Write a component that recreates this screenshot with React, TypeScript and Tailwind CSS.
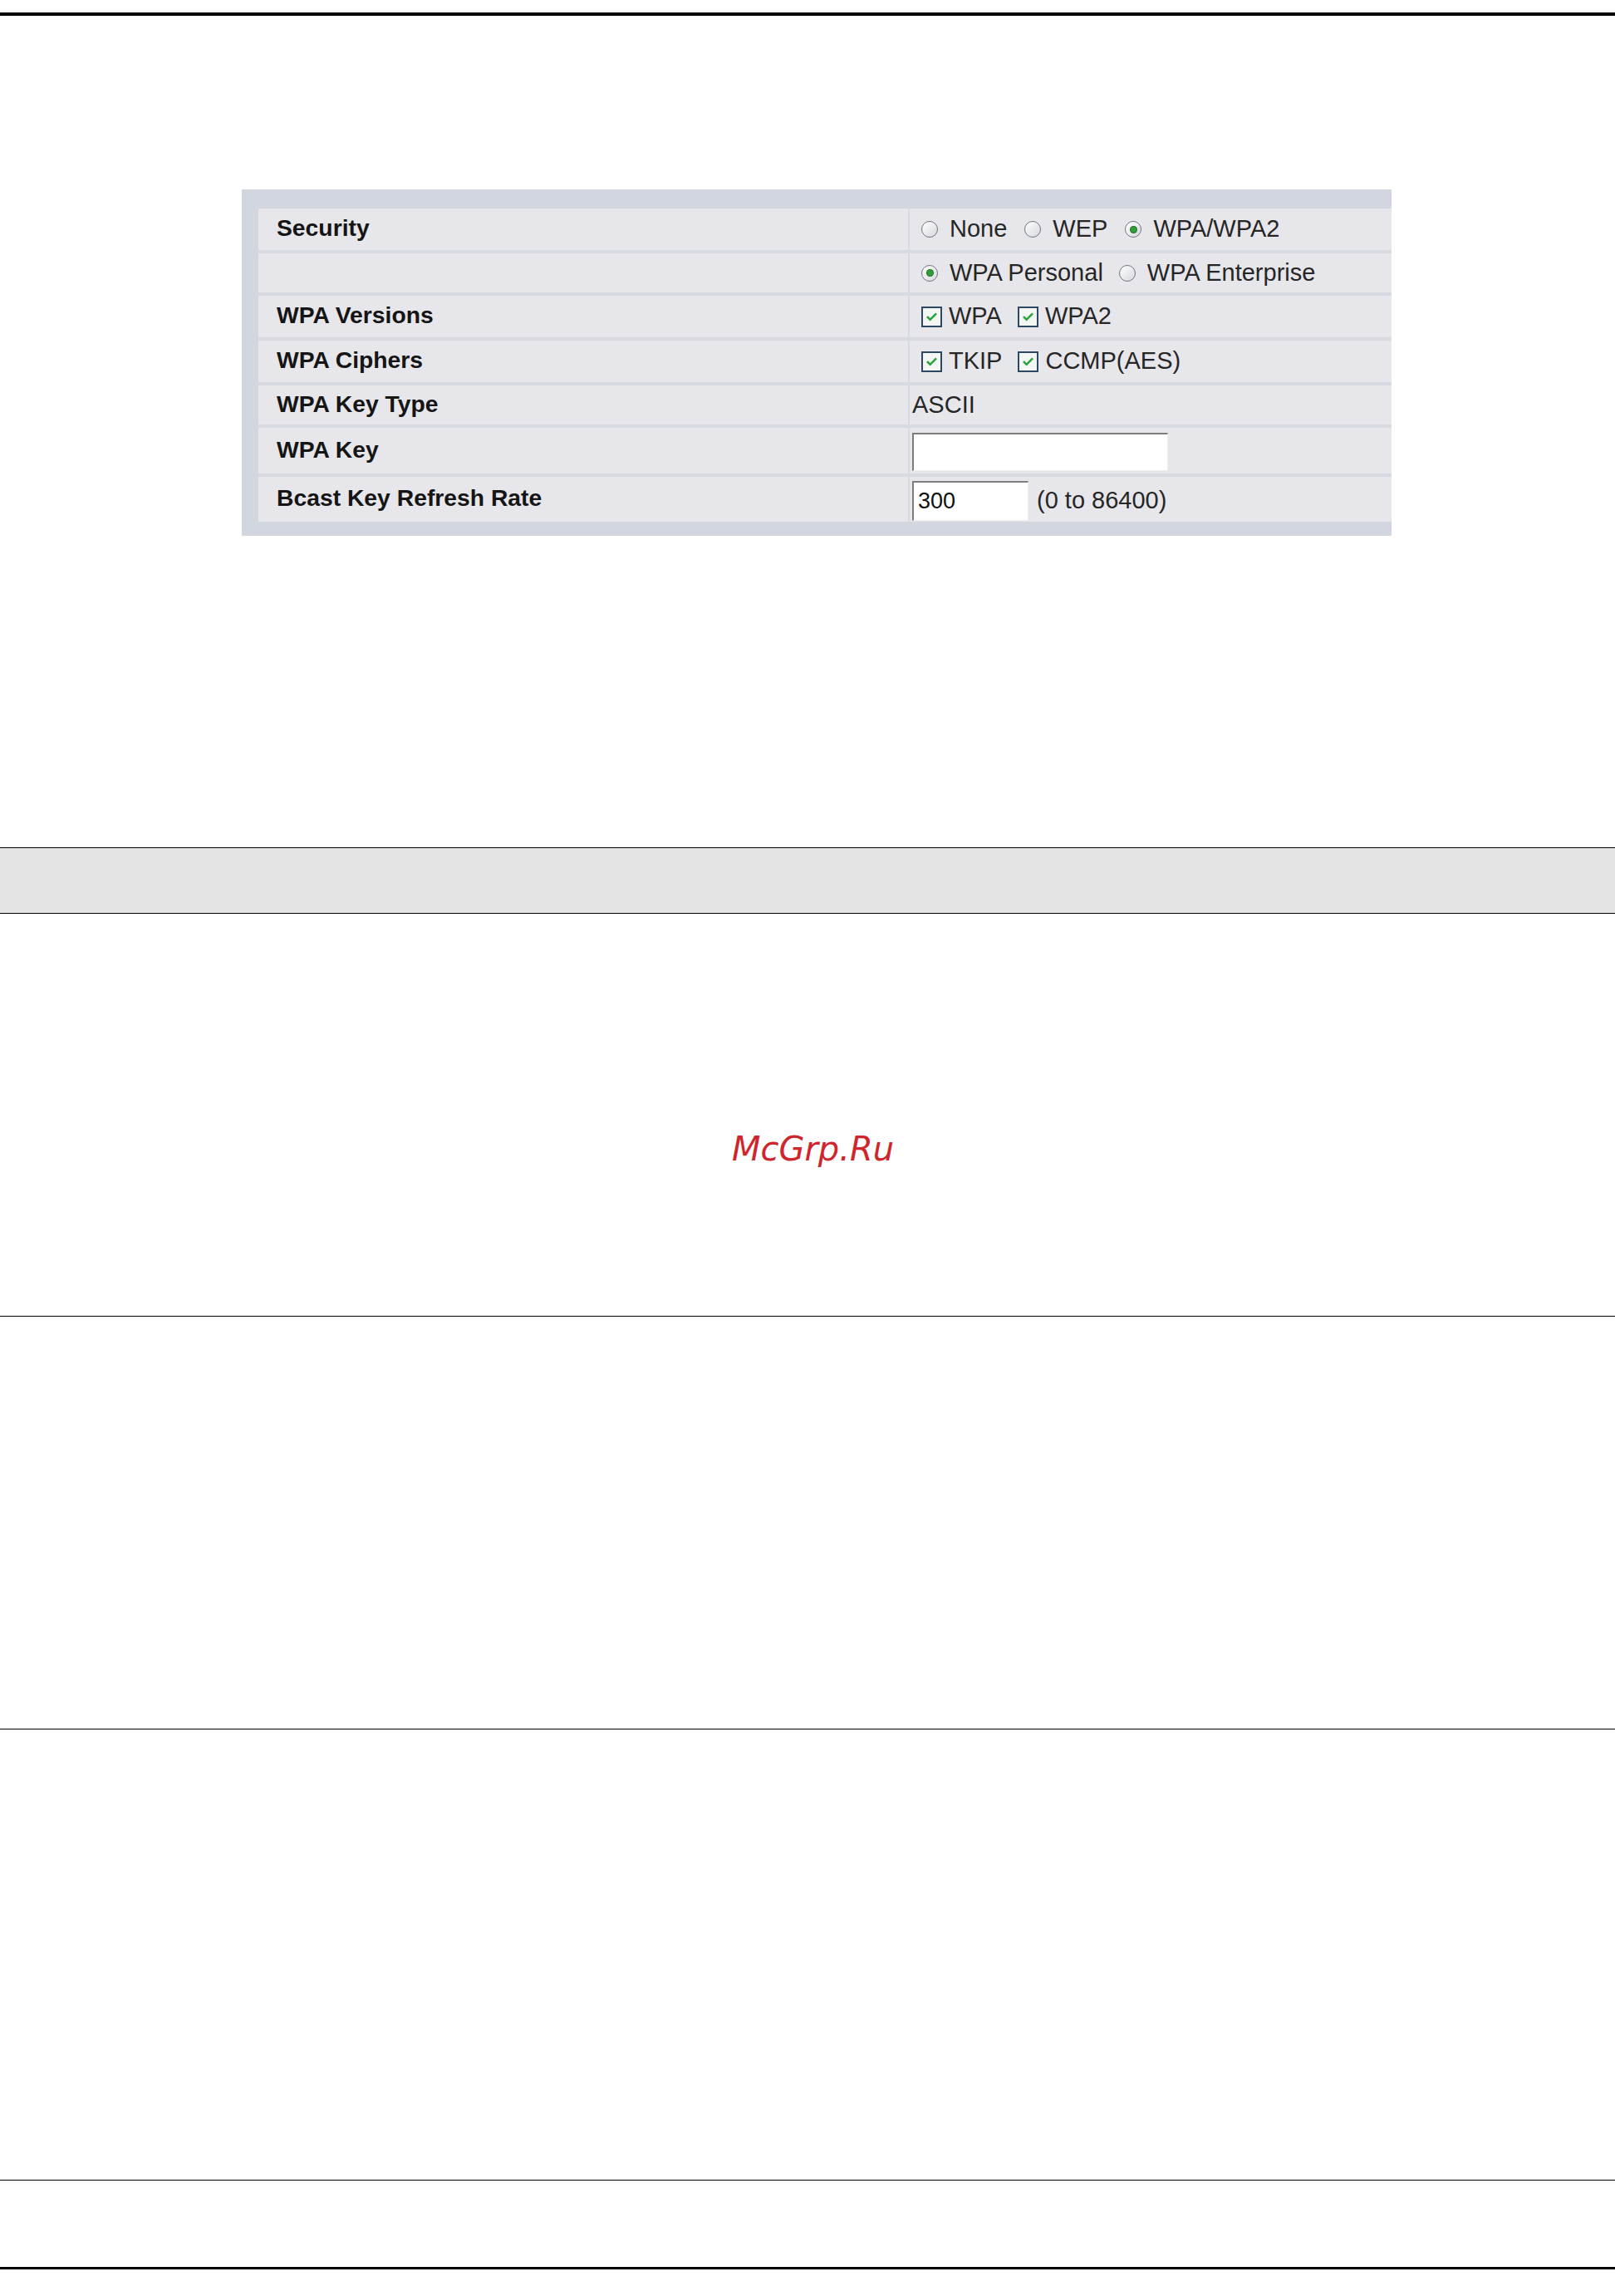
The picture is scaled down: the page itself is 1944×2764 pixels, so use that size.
import React from 'react';

// Radio button drawn like the old router UI
const Radio = ({ checked = false }: { checked?: boolean }) => (
  <span className="relative inline-flex h-[20px] w-[20px] shrink-0 items-center justify-center rounded-full border-[1.5px] border-[#6f7682] bg-gradient-to-br from-white to-[#d6d8dc]">
    {checked && <span className="h-[7px] w-[7px] rounded-full bg-[#2f9e3a] ring-1 ring-[#1f6e28]" />}
  </span>
);

const Checkbox = () => (
  <span className="inline-flex h-[25px] w-[25px] shrink-0 items-center justify-center border-2 border-[#2c4862] bg-[#f4f6f4]">
    <svg viewBox="0 0 16 16" className="h-[15px] w-[15px]">
      <path d="M3 8.5l3 3 7-7" fill="none" stroke="#25a23a" strokeWidth="2.6" strokeLinecap="square" />
    </svg>
  </span>
);

const RadioItem = ({ label, checked }: { label: string; checked?: boolean }) => (
  <span className="inline-flex items-center gap-[14px]">
    <Radio checked={checked} />
    <span>{label}</span>
  </span>
);

const CheckItem = ({ label }: { label: string }) => (
  <span className="inline-flex items-center gap-[8px]">
    <Checkbox />
    <span>{label}</span>
  </span>
);

const rows: { label: string; h: string; content: React.ReactNode }[] = [
  {
    label: 'Security',
    h: 'h-[50px]',
    content: (
      <div className="flex items-center gap-[21px] pl-[14px]">
        <RadioItem label="None" />
        <RadioItem label="WEP" />
        <RadioItem label="WPA/WPA2" checked />
      </div>
    ),
  },
  {
    label: '',
    h: 'h-[47px]',
    content: (
      <div className="flex items-center gap-[19px] pl-[14px]">
        <RadioItem label="WPA Personal" checked />
        <RadioItem label="WPA Enterprise" />
      </div>
    ),
  },
  {
    label: 'WPA Versions',
    h: 'h-[50px]',
    content: (
      <div className="flex items-center gap-[19px] pl-[14px]">
        <CheckItem label="WPA" />
        <CheckItem label="WPA2" />
      </div>
    ),
  },
  {
    label: 'WPA Ciphers',
    h: 'h-[50px]',
    content: (
      <div className="flex items-center gap-[19px] pl-[14px]">
        <CheckItem label="TKIP" />
        <CheckItem label="CCMP(AES)" />
      </div>
    ),
  },
  {
    label: 'WPA Key Type',
    h: 'h-[47px]',
    content: <div className="pl-[3px]">ASCII</div>,
  },
  {
    label: 'WPA Key',
    h: 'h-[55px]',
    content: (
      <div className="pl-[3px] pt-[2px]">
        <div className="h-[46px] w-[308px] border-t-2 border-l-2 border-r border-b border-t-[#7d7d7d] border-l-[#7d7d7d] border-r-[#ededed] border-b-[#ededed] bg-white" />
      </div>
    ),
  },
  {
    label: 'Bcast Key Refresh Rate',
    h: 'h-[54px]',
    content: (
      <div className="flex items-center gap-[10px] pl-[3px] pt-[4px]">
        <div className="flex h-[48px] w-[140px] items-center border-t-2 border-l-2 border-r border-b border-t-[#7d7d7d] border-l-[#7d7d7d] border-r-[#ededed] border-b-[#ededed] bg-white pl-[5px] text-[27px] text-[#111]">
          300
        </div>
        <span>(0 to 86400)</span>
      </div>
    ),
  },
];

const App = () => {
  return (
    <div className="h-[2764px] w-full overflow-hidden bg-white" style={{ fontFamily: '"Liberation Sans", Arial, sans-serif' }}>
      <div className="pt-[15px]">
        <div className="h-[4px] w-full bg-black" />
      </div>

      {/* settings panel */}
      <div className="ml-[291px] mt-[209px] w-[1384px] bg-[#d2d6de] pt-[23px] pb-[17px] pl-[20px]">
        <div className="grid grid-cols-[782px_580px] gap-x-[2px] gap-y-[4px] bg-[#d7dae1]">
          {rows.map((r, i) => (
            <React.Fragment key={i}>
              <div className={`flex items-center bg-[#e7e7eb] pl-[22px] pb-[3px] text-[28.3px] font-bold text-[#151515] ${r.h}`}>
                {r.label}
              </div>
              <div className={`flex items-center bg-[#e7e7eb] text-[29px] text-[#262626] ${r.h}`}>
                {r.content}
              </div>
            </React.Fragment>
          ))}
        </div>
      </div>

      {/* grey heading band */}
      <div className="mt-[375px] h-[80px] border-y border-black bg-[#e4e4e4]" />

      <div className="flex h-[484px] justify-center pl-[13px] pt-[259px]">
        <span
          className="text-[40px] leading-[48px] italic text-[#cf252c]"
          style={{ fontFamily: '"DejaVu Sans", sans-serif' }}
        >
          McGrp.Ru
        </span>
      </div>

      <div className="h-[1px] w-full bg-black" />
      <div className="h-[496px]" />
      <div className="h-[1px] w-full bg-black" />
      <div className="h-[542px]" />
      <div className="h-[1px] w-full bg-black" />
      <div className="h-[104px]" />
      <div className="h-[3px] w-full bg-black" />
    </div>
  );
};

export default App;
